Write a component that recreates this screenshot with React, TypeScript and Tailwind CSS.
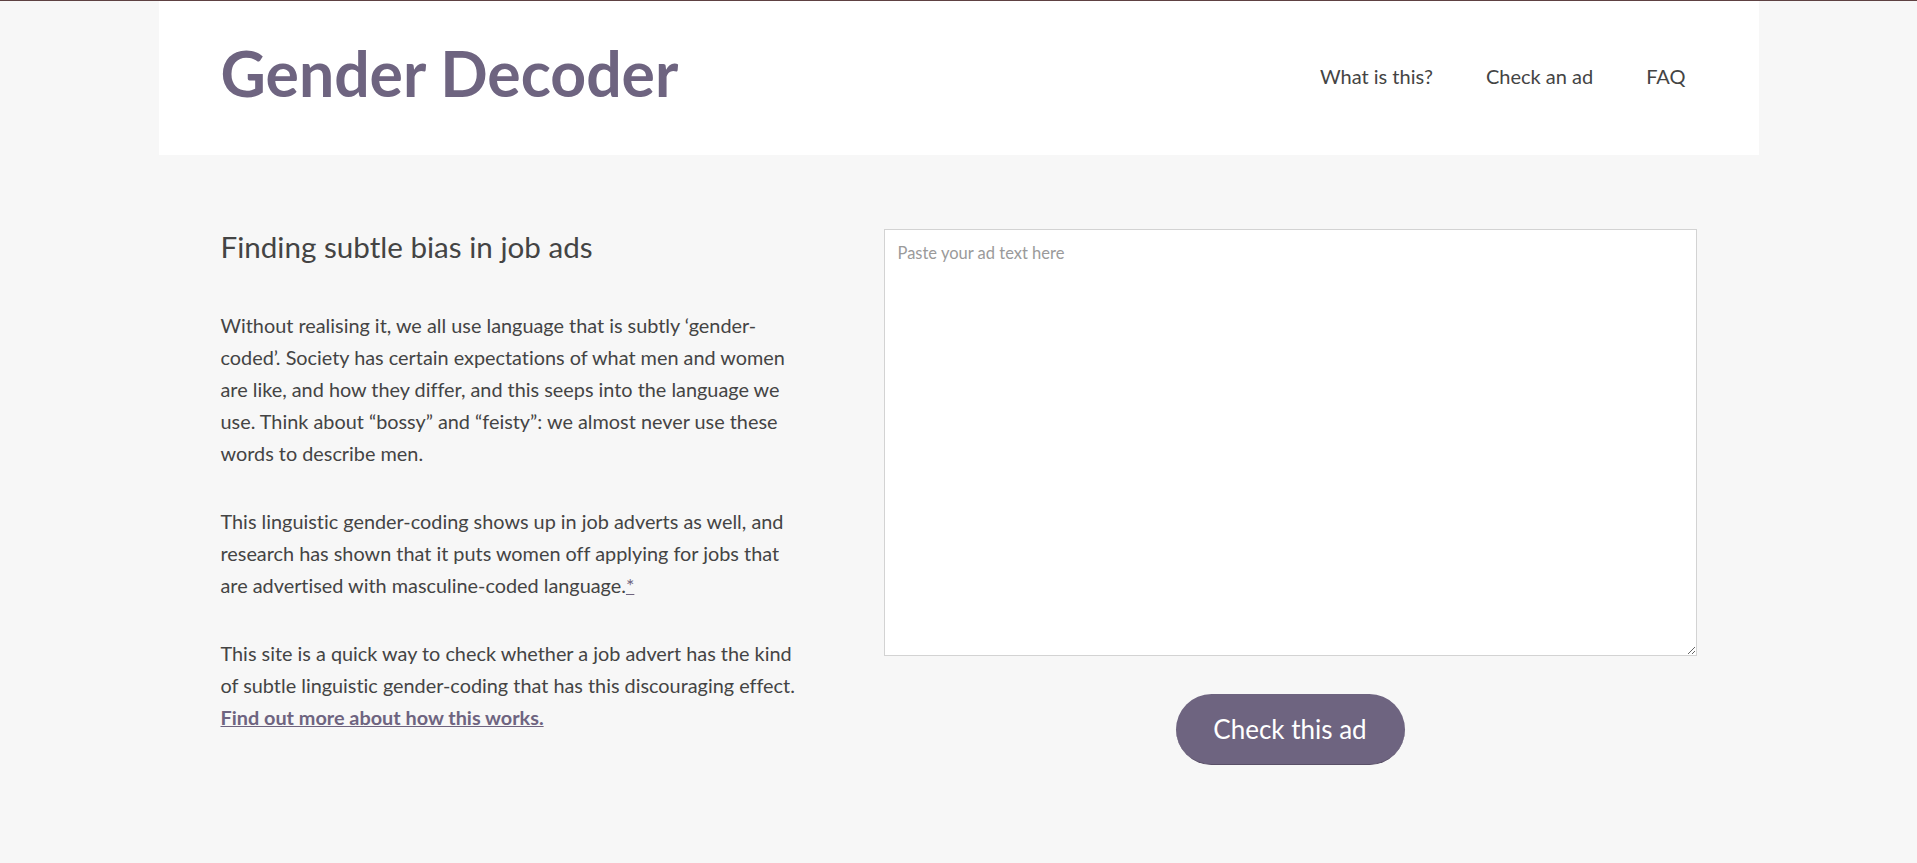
import React from 'react';

const font = { fontFamily: 'Lato, "Open Sans", sans-serif' };

function Header() {
  return (
    <header className="bg-white h-[154px] flex items-center justify-between pl-[62px] pr-[73px]">
      <h1 className="text-[62.5px] font-bold text-[#6e6480] leading-none -mt-[9px]">Gender Decoder</h1>
      <nav className="flex items-center gap-[53px] text-[20px] text-[#444] -mt-[5px]">
        <a href="#">What is this?</a>
        <a href="#">Check an ad</a>
        <a href="#">FAQ</a>
      </nav>
    </header>
  );
}

export default function App() {
  return (
    <div className="min-h-screen bg-[#f7f7f7] border-t border-[#5e4142] [font-variant-ligatures:none]" style={font}>
      <div className="w-[1600px] mx-auto">
        <Header />
        <main className="flex px-[62px] pt-[74px] pb-[100px]">
          <section className="w-[579px] text-[#444]">
            <h2 className="text-[29.6px] leading-[38px] -mt-[1px]">Finding subtle bias in job ads</h2>
            <div className="mt-[43px] text-[19.85px] leading-[32px] space-y-[36px]">
              <p>
                Without realising it, we all use language that is subtly ‘gender-coded’. Society has certain expectations of what men and women are like, and how they differ, and this seeps into the language we use. Think about “bossy” and “feisty”: we almost never use these words to describe men.
              </p>
              <p>
                This linguistic gender-coding shows up in job adverts as well, and research has shown that it puts women off applying for jobs that are advertised with masculine-coded language.
                <a href="#" className="text-[#6e6480] underline">*</a>
              </p>
              <p>
                This site is a quick way to check whether a job advert has the kind of subtle linguistic gender-coding that has this discouraging effect.{' '}
                <a href="#" className="text-[#6e6480] font-bold underline">Find out more about how this works.</a>
              </p>
            </div>
          </section>
          <section className="ml-[84px] flex-1 flex flex-col items-center">
            <textarea
              className="w-full h-[427px] bg-white border border-[#d3d3d3] px-[13px] pt-[11px] pb-[9px] text-[16.5px] text-[#444] placeholder:text-[#9a9a9a] outline-none"
              placeholder="Paste your ad text here"
            />
            <button className="mt-[38px] w-[229px] h-[71px] rounded-full bg-[#6e6480] text-white text-[26px] border-b border-[#5a5068]">
              Check this ad
            </button>
          </section>
        </main>
      </div>
    </div>
  );
}
